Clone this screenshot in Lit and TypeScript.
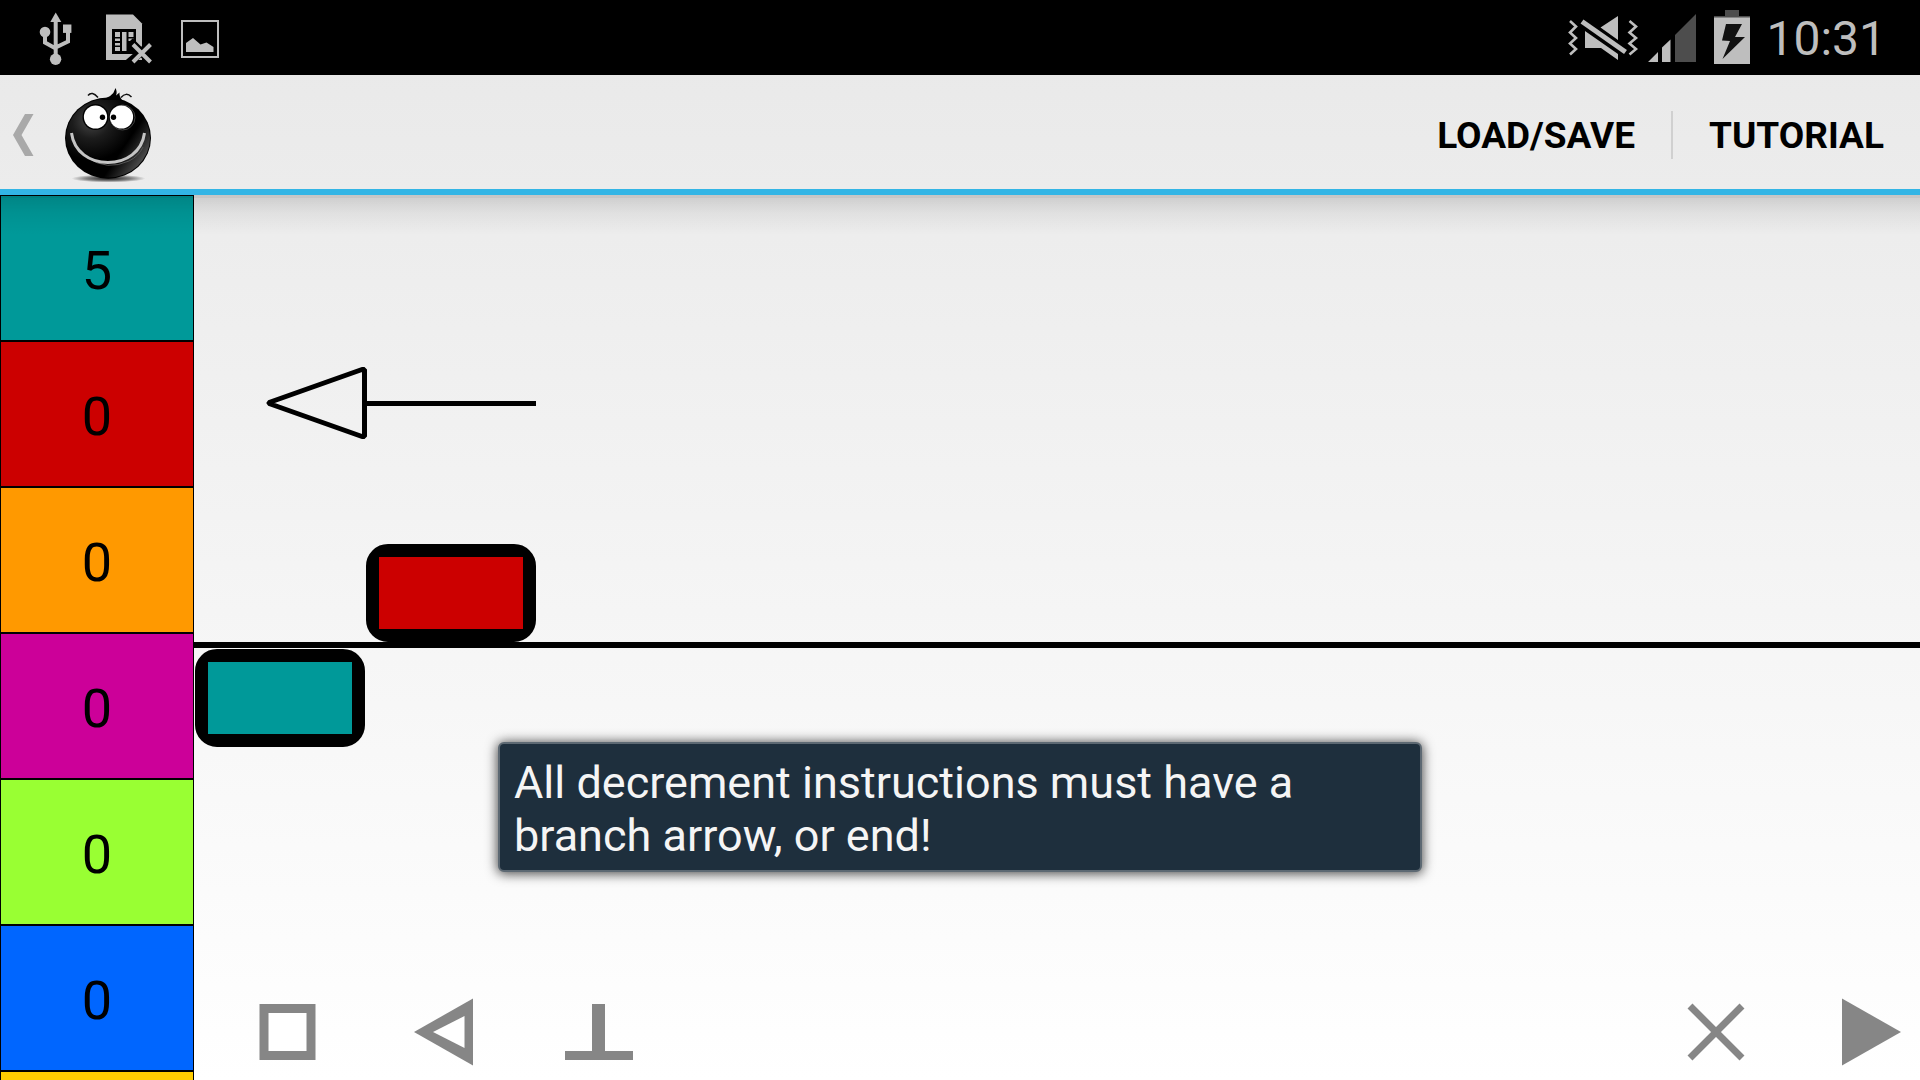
import { LitElement, html, css, svg, nothing } from "lit";
import { customElement, property } from "lit/decorators.js";
import { styleMap } from "lit/directives/style-map.js";

interface Register {
  color: string;
  count?: number;
}

interface Instruction {
  label: string;
  color: string;
  x: number;
  y: number;
}

const REGISTERS: Register[] = [
  { color: "#009999", count: 5 },
  { color: "#cc0000", count: 0 },
  { color: "#ff9900", count: 0 },
  { color: "#cc0099", count: 0 },
  { color: "#99ff33", count: 0 },
  { color: "#0066ff", count: 0 },
  { color: "#ffcc00" },
];

const INSTRUCTIONS: Instruction[] = [
  { label: "Increment", color: "#009999", x: 1, y: 454 },
  { label: "Decrement", color: "#cc0000", x: 172, y: 349 },
];

@customElement("status-bar")
export class StatusBar extends LitElement {
  static styles = css`
    :host {
      display: flex;
      align-items: center;
      justify-content: space-between;
      height: 75px;
      padding: 0 34px 0 39px;
      background: #000;
      color: #bebebe;
      font: 48px/75px Roboto, "Liberation Sans", sans-serif;
    }
    .group {
      display: flex;
      align-items: center;
    }
    .notices {
      gap: 29px;
    }
    .system {
      gap: 12px;
    }
    svg {
      display: block;
      overflow: visible;
      fill: #bebebe;
    }
    .clock {
      padding: 2px 0 0 4px;
    }
    .dim {
      fill: #4d4d4d;
    }
    .ink {
      fill: #000;
    }
    .line {
      fill: none;
      stroke: #bebebe;
    }
    .gap {
      fill: none;
      stroke: #000;
    }
  `;

  render() {
    return html`
      <div class="group notices">
        <svg width="38" height="75" viewBox="39 0 38 75" role="img" aria-label="USB connected">
          <path d="M55.7 12.5 61.3 22H50.3Z" />
          <path class="line" stroke-width="4" d="M55.7 20V58M45 32V42.5L55.7 48.5M68 30V41.5L55.7 47.5" />
          <circle cx="45" cy="32" r="5.3" />
          <circle cx="55.6" cy="59.3" r="5.7" />
          <rect x="63" y="24.5" width="8.4" height="8.4" />
        </svg>
        <svg width="46" height="75" viewBox="106 0 46 75" role="img" aria-label="No SIM card">
          <path d="M106 14.5H133L142 23.5V60H106Z" />
          <rect class="ink" x="112" y="29" width="24" height="25" />
          <path d="M115 32h5v5h-5zM115 38.500h5v2.500h-5zM115 43h5v2.500h-5zM115 47h5v4h-5zM122 32h4.500v19h-4.500zM128.500 32h5v5h-5zM128.500 38.500h5v2.500h-5z" />
          <path class="gap" stroke-width="8" d="M130 41 154 65M154 41 125 66" />
          <path class="line" stroke-width="4" d="M133 44.500 150.500 62M150.500 44.500 133 62" />
        </svg>
        <svg width="38" height="75" viewBox="181 0 38 75" role="img" aria-label="Screenshot saved">
          <rect class="line" x="182" y="21" width="36" height="36" stroke-width="2" />
          <path d="M186 52V43L193 38 200.500 44.500 206.500 42.500 213.500 47V52Z" />
        </svg>
      </div>
      <div class="group system">
        <svg width="68" height="75" viewBox="1568 0 68 75" role="img" aria-label="Vibrate">
          <path class="line" stroke-width="2.600" d="M1570 21 1576 26.500 1570 32.500 1576 38 1570 43.500 1576 49 1570 54.500M1629.500 21 1636 26.500 1629.500 32.500 1636 38 1629.500 43.500 1636 49 1629.500 54.500" />
          <path d="M1618 16V40L1600.500 27.500ZM1585 31 1618 54V60L1601 48H1585Z" />
          <path class="line" stroke-width="5" d="M1582 21.500 1625.500 52" />
        </svg>
        <svg width="48" height="75" viewBox="1648 0 48 75" role="img" aria-label="Signal">
          <path d="M1648 62H1658V52ZM1662 62V47.500L1670.500 39.500V62Z" />
          <path class="dim" d="M1675 62V35L1696 14V62Z" />
        </svg>
        <svg width="42" height="75" viewBox="1708 0 42 75" role="img" aria-label="Charging">
          <path class="dim" d="M1725 10h14v6h11v2h-36v-2h11Z" />
          <rect x="1714" y="17.500" width="36" height="46.500" />
          <path fill="#111" d="M1726 24H1742L1735 37H1745L1722.500 59 1730 41 1722 40.500Z" />
        </svg>
        <time class="clock">10:31</time>
      </div>
    `;
  }
}

@customElement("action-bar")
export class ActionBar extends LitElement {
  static styles = css`
    :host {
      display: flex;
      align-items: center;
      justify-content: space-between;
      height: 114px;
      border-bottom: 6px solid #33b5e5;
    }
    .home {
      display: flex;
      align-items: center;
      gap: 24px;
      height: 114px;
      padding: 0 8px 0 12px;
    }
    .home,
    .home svg {
      flex: none;
    }
    .actions {
      display: flex;
      align-items: center;
      padding-top: 6px;
    }
    .action {
      padding: 2px 36px 0;
      border: 0;
      background: none;
      color: #000;
      font: bold 37px/46px Roboto, "Liberation Sans", sans-serif;
      text-transform: uppercase;
    }
    .action + .action {
      border-left: 2px solid #d0d0d0;
    }
  `;

  render() {
    return html`
      <a class="home" href="#" aria-label="Navigate up">
        <svg width="22" height="114" viewBox="12 75 22 114" aria-hidden="true">
          <path fill="#a9a9a9" d="M25 114H33.500L21.500 135 33.500 156H25L13 135Z" />
        </svg>
        <svg width="100" height="114" viewBox="58 75 100 114" aria-hidden="true">
          <defs>
            <radialGradient id="body" cx="0.3" cy="0.28" r="0.5">
              <stop offset="0" stop-color="#484848" />
              <stop offset="0.45" stop-color="#1c1c1c" />
              <stop offset="1" stop-color="#000" />
            </radialGradient>
            <linearGradient id="sheen" x1="0.45" y1="0.5" x2="1" y2="0.85">
              <stop offset="0.4" stop-color="#777" stop-opacity="0" />
              <stop offset="1" stop-color="#888" stop-opacity="0.8" />
            </linearGradient>
            <radialGradient id="ground">
              <stop offset="0" stop-color="#000" stop-opacity="0.9" />
              <stop offset="0.6" stop-color="#000" stop-opacity="0.45" />
              <stop offset="1" stop-color="#000" stop-opacity="0" />
            </radialGradient>
          </defs>
          <ellipse cx="108.500" cy="178.500" rx="37" ry="4" fill="url(#ground)" />
          <ellipse cx="108" cy="138" rx="43" ry="40.500" fill="#000" />
          <ellipse cx="108" cy="138" rx="42" ry="39.500" fill="url(#body)" />
          <ellipse cx="108" cy="138" rx="42" ry="39.500" fill="url(#sheen)" />
          <path d="M99 100Q113 98 115.500 88Q117.500 92 116 95.500L119.500 92.500Q119 96 122 100Z" />
          <path fill="none" stroke="#111" stroke-width="1.500" d="M88 95.500Q92 90.500 98 97.500M121 97.500Q126 91.500 131.500 97" />
          <circle cx="95.500" cy="117" r="13" />
          <circle cx="122" cy="117" r="13" />
          <circle cx="122.500" cy="117.500" r="12.500" fill="none" stroke="#444" />
          <circle cx="95.500" cy="117" r="11.600" fill="#fff" />
          <circle cx="121.500" cy="117" r="11.600" fill="#fff" />
          <circle cx="102.500" cy="117.300" r="2.700" />
          <circle cx="113.500" cy="117.300" r="2.700" />
          <path fill="none" stroke="#555" stroke-width="1" d="M88 158Q107 171 129 161Q139 156 143 147" />
          <path fill="none" stroke="#c4c4c4" stroke-width="3" d="M71.500 133C74 152 90 162.500 108 162.500S142 152 144.500 133" />
        </svg>
      </a>
      <nav class="actions" aria-label="Program">
        <button class="action">Load/Save</button>
        <button class="action">Tutorial</button>
      </nav>
    `;
  }
}

@customElement("register-list")
export class RegisterList extends LitElement {
  @property({ attribute: false }) registers: Register[] = [];

  static styles = css`
    :host {
      display: block;
      width: 194px;
      overflow: hidden;
    }
    .list {
      margin: 0;
      padding: 0;
      list-style: none;
    }
    .register {
      display: block;
      box-sizing: border-box;
      width: 100%;
      height: 146px;
      padding: 6px 0 0;
      border: 1px solid #000;
      color: #000;
      font: 54px/64px Roboto, "Liberation Sans", sans-serif;
      text-align: center;
    }
  `;

  render() {
    return html`
      <ul class="list">
        ${this.registers.map(
          (r) => html`<li>
            <button class="register" style=${styleMap({ backgroundColor: r.color })}>${r.count ?? nothing}</button>
          </li>`,
        )}
      </ul>
    `;
  }
}

@customElement("program-canvas")
export class ProgramCanvas extends LitElement {
  @property({ attribute: false }) instructions: Instruction[] = [];

  static styles = css`
    :host {
      display: block;
      position: relative;
    }
    .track {
      position: absolute;
      top: 447px;
      left: 0;
      right: 0;
      height: 6px;
      background: #000;
    }
    .instruction {
      position: absolute;
      width: 170px;
      height: 98px;
      border: 13px solid #000;
      border-radius: 22px;
      padding: 0;
      background: #000;
    }
    .fill {
      display: block;
      height: 72px;
    }
    .branch {
      position: absolute;
      left: 72px;
      top: 168px;
    }
  `;

  render() {
    return html`
      <div class="track"></div>
      <svg class="branch" width="272" height="80" viewBox="0 0 272 80" role="img" aria-label="Branch arrow">
        <path
          fill="none"
          stroke="#000"
          stroke-width="5"
          stroke-linejoin="bevel"
          d="M96 6.500 3 39.500V40.500L96 73.500H98.500V6.500ZM98.500 40.500H270"
        />
      </svg>
      ${this.instructions.map(
        (i) => html`<button
          class="instruction"
          aria-label=${i.label}
          style=${styleMap({ left: `${i.x}px`, top: `${i.y}px` })}
        >
          <span class="fill" style=${styleMap({ backgroundColor: i.color })}></span>
        </button>`,
      )}
    `;
  }
}

const TOOL_ICONS = {
  box: svg`<rect x="24" y="24.500" width="47" height="47" fill="#fff" stroke="#868686" stroke-width="9" />`,
  branch: svg`<path fill="#868686" d="M18 48 77 14.500V81.500Z" /><path fill="#fff" d="M37 48 68.500 32V64Z" />`,
  end: svg`<path fill="#868686" d="M40 20H53V67H81V76H13V67H40Z" />`,
  clear: svg`<path fill="none" stroke="#868686" stroke-width="7" d="M22 22 74 74M74 22 22 74" />`,
  run: svg`<path fill="#868686" d="M18 14.500 77 48 18 81.500Z" />`,
};

@customElement("tool-bar")
export class ToolBar extends LitElement {
  static styles = css`
    :host {
      display: flex;
      justify-content: space-between;
      padding-left: 46px;
    }
    .group {
      display: flex;
      gap: 60px;
    }
    .tool {
      width: 96px;
      height: 96px;
      padding: 0;
      border: 0;
      background: none;
    }
    svg {
      display: block;
    }
  `;

  private tool(label: string, icon: keyof typeof TOOL_ICONS) {
    return html`<button class="tool" aria-label=${label}>
      <svg width="96" height="96" viewBox="0 0 96 96" aria-hidden="true">${TOOL_ICONS[icon]}</svg>
    </button>`;
  }

  render() {
    return html`
      <div class="group">
        ${this.tool("Add instruction", "box")} ${this.tool("Add branch", "branch")} ${this.tool("Add end", "end")}
      </div>
      <div class="group">${this.tool("Clear", "clear")} ${this.tool("Run", "run")}</div>
    `;
  }
}

@customElement("app-root")
export class AppRoot extends LitElement {
  static styles = css`
    :host {
      display: flex;
      flex-direction: column;
      position: relative;
      height: 100vh;
      overflow: hidden;
      background: linear-gradient(#e8e8e8, #fff);
    }
    .workspace {
      display: flex;
      flex: 1;
      min-height: 0;
      position: relative;
    }
    .workspace::before {
      content: "";
      position: absolute;
      z-index: 1;
      inset: 0 0 auto;
      height: 40px;
      background: linear-gradient(
        rgba(0, 0, 0, 0.16) 3px,
        rgba(0, 0, 0, 0.12) 3px,
        rgba(0, 0, 0, 0.05) 18px,
        rgba(0, 0, 0, 0)
      );
      pointer-events: none;
    }
    .editor {
      display: flex;
      flex: 1;
      flex-direction: column;
      min-width: 0;
    }
    .canvas {
      flex: 1;
    }
    .toast {
      position: absolute;
      left: 50%;
      bottom: 208px;
      transform: translateX(-50%);
      box-sizing: border-box;
      width: 924px;
      max-width: 90%;
      margin: 0;
      padding: 12px 14px 8px;
      border: 2px solid #5d6973;
      border-radius: 6px;
      background: #1e2f3d;
      box-shadow: 0 1px 12px 1px rgba(0, 0, 0, 0.7);
      color: #f5f5f5;
      font: 45px/53px Roboto, "Liberation Sans", sans-serif;
    }
  `;

  render() {
    return html`
      <status-bar></status-bar>
      <action-bar></action-bar>
      <main class="workspace">
        <register-list .registers=${REGISTERS}></register-list>
        <section class="editor">
          <program-canvas class="canvas" .instructions=${INSTRUCTIONS}></program-canvas>
          <tool-bar></tool-bar>
        </section>
      </main>
      <p class="toast" role="status">All decrement instructions must have a branch arrow, or end!</p>
    `;
  }
}
